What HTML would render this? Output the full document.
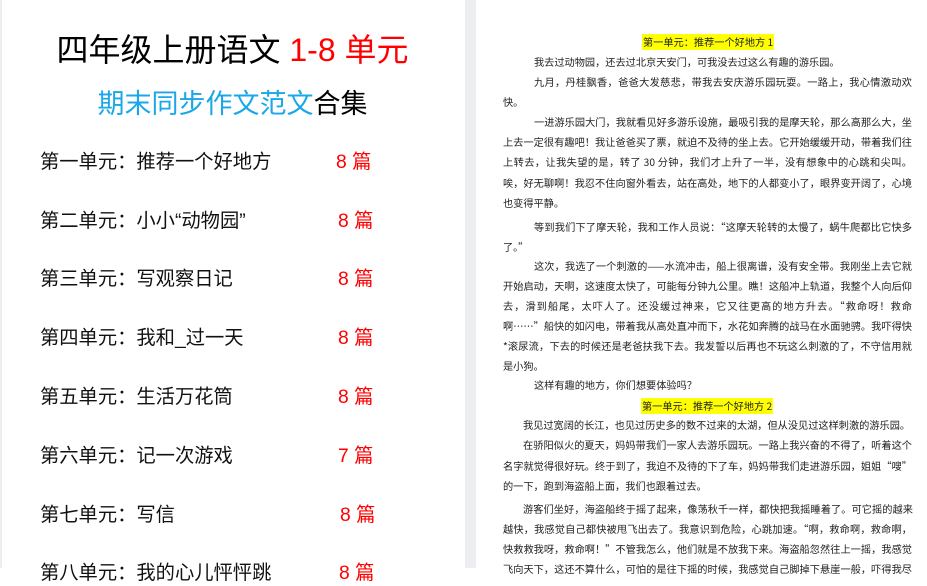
<!DOCTYPE html>
<html><head><meta charset="utf-8">
<style>
*{margin:0;padding:0;box-sizing:border-box}
body{width:927px;height:568px;overflow:hidden;background:#fff;position:relative;font-family:"Liberation Sans","Noto Sans CJK SC",sans-serif}
.gap{position:absolute;left:465px;top:0;width:11px;height:568px;background:#eceef2}
.edge{position:absolute;left:0;top:0;width:2px;height:568px;background:#eceef2}
.t1{position:absolute;left:0;width:465px;top:30px;text-align:center;font-size:32px;line-height:40px;color:#000;white-space:nowrap}
.t2{position:absolute;left:0;width:465px;top:86px;text-align:center;font-size:27px;line-height:36px;color:#1aa7e8;white-space:nowrap}
.it{position:absolute;left:40px;font-size:19.3px;line-height:24px;color:#111;white-space:nowrap}
.n{position:absolute;font-size:19.3px;line-height:24px;color:#f00;white-space:nowrap}
.l{position:absolute;left:503px;width:409px;font-size:10.2px;line-height:14px;color:#222;white-space:nowrap;font-family:"Noto Sans CJK SC",sans-serif}
.j{text-align:justify;text-align-last:justify;white-space:normal}
.h{position:absolute;font-size:10.2px;line-height:16px;background:#ff0;color:#222;white-space:nowrap;font-family:"Noto Sans CJK SC",sans-serif;padding:0 1px}
</style></head><body>
<div class="edge"></div>
<div class="gap"></div>
<div class="t1">四年级上册语文 <span style="color:#f00">1-8 单元</span></div>
<div class="t2">期末同步作文范文<span style="color:#000">合集</span></div>

<div class="it" style="top:151px">第一单元：推荐一个好地方</div><div class="n" style="left:336px;top:151px">8 篇</div>
<div class="it" style="top:210px">第二单元：小小“动物园”</div><div class="n" style="left:338px;top:210px">8 篇</div>
<div class="it" style="top:268px">第三单元：写观察日记</div><div class="n" style="left:338px;top:268px">8 篇</div>
<div class="it" style="top:327px">第四单元：我和_过一天</div><div class="n" style="left:338px;top:327px">8 篇</div>
<div class="it" style="top:386px">第五单元：生活万花筒</div><div class="n" style="left:338px;top:386px">8 篇</div>
<div class="it" style="top:445px">第六单元：记一次游戏</div><div class="n" style="left:338px;top:445px">7 篇</div>
<div class="it" style="top:504px">第七单元：写信</div><div class="n" style="left:340px;top:504px">8 篇</div>
<div class="it" style="top:562px">第八单元：我的心儿怦怦跳</div><div class="n" style="left:339px;top:562px">8 篇</div>

<div class="h" style="left:642px;top:34px">第一单元：推荐一个好地方 1</div>
<div class="l" style="top:55px;left:534px">我去过动物园，还去过北京天安门，可我没去过这么有趣的游乐园。</div>
<div class="l j" style="top:75px;left:534px;width:378px">九月，丹桂飘香，爸爸大发慈悲，带我去安庆游乐园玩耍。一路上，我心情激动欢</div>
<div class="l" style="top:95px">快。</div>
<div class="l j" style="top:115px;left:534px;width:378px">一进游乐园大门，我就看见好多游乐设施，最吸引我的是摩天轮，那么高那么大，坐</div>
<div class="l j" style="top:135px">上去一定很有趣吧！我让爸爸买了票，就迫不及待的坐上去。它开始缓缓开动，带着我们往</div>
<div class="l j" style="top:155px">上转去，让我失望的是，转了 30 分钟，我们才上升了一半，没有想象中的心跳和尖叫。</div>
<div class="l j" style="top:176px">唉，好无聊啊！我忍不住向窗外看去，站在高处，地下的人都变小了，眼界变开阔了，心境</div>
<div class="l" style="top:196px">也变得平静。</div>
<div class="l j" style="top:220px;left:534px;width:378px">等到我们下了摩天轮，我和工作人员说：“这摩天轮转的太慢了，蜗牛爬都比它快多</div>
<div class="l" style="top:240px">了。”</div>
<div class="l j" style="top:259px;left:534px;width:378px">这次，我选了一个刺激的——水流冲击，船上很离谱，没有安全带。我刚坐上去它就</div>
<div class="l j" style="top:279px">开始启动，天啊，这速度太快了，可能每分钟九公里。瞧！这船冲上轨道，我整个人向后仰</div>
<div class="l j" style="top:299px">去，滑到船尾，太吓人了。还没缓过神来，它又往更高的地方升去。“救命呀！救命</div>
<div class="l j" style="top:319px">啊……”船快的如闪电，带着我从高处直冲而下，水花如奔腾的战马在水面驰骋。我吓得快</div>
<div class="l j" style="top:339px">*滚尿流，下去的时候还是老爸扶我下去。我发誓以后再也不玩这么刺激的了，不守信用就</div>
<div class="l" style="top:359px">是小狗。</div>
<div class="l" style="top:378px;left:534px">这样有趣的地方，你们想要体验吗？</div>
<div class="h" style="left:641px;top:398px">第一单元：推荐一个好地方 2</div>
<div class="l" style="top:418px;left:523px">我见过宽阔的长江，也见过历史多的数不过来的太湖，但从没见过这样刺激的游乐园。</div>
<div class="l j" style="top:438px;left:523px;width:389px">在骄阳似火的夏天，妈妈带我们一家人去游乐园玩。一路上我兴奋的不得了，听着这个</div>
<div class="l j" style="top:459px">名字就觉得很好玩。终于到了，我迫不及待的下了车，妈妈带我们走进游乐园，姐姐“嗖”</div>
<div class="l" style="top:479px">的一下，跑到海盗船上面，我们也跟着过去。</div>
<div class="l j" style="top:502px;left:523px;width:390px">游客们坐好，海盗船终于摇了起来，像荡秋千一样，都快把我摇睡着了。可它摇的越来</div>
<div class="l j" style="top:522px">越快，我感觉自己都快被甩飞出去了。我意识到危险，心跳加速。“啊，救命啊，救命啊，</div>
<div class="l j" style="top:542px">快救救我呀，救命啊！”不管我怎么，他们就是不放我下来。海盗船忽然往上一摇，我感觉</div>
<div class="l j" style="top:562px">飞向天下，这还不算什么，可怕的是往下摇的时候，我感觉自己脚掉下悬崖一般，吓得我尽</div>
</body></html>
